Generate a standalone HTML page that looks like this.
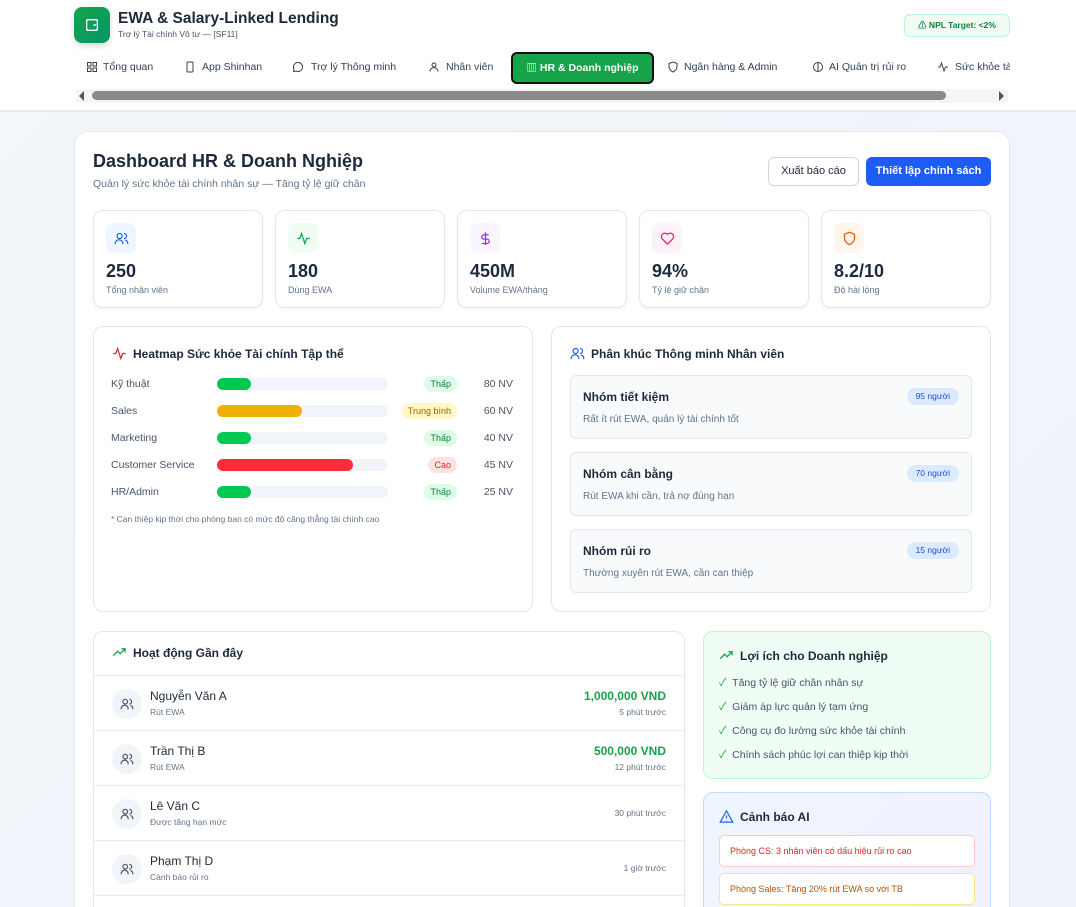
<!DOCTYPE html>
<html><head><meta charset="utf-8"><style>
*{box-sizing:border-box;margin:0;padding:0}
html,body{width:1076px;height:907px;overflow:hidden}
body{font-family:"Liberation Sans","Noto Sans CJK SC",sans-serif;background:linear-gradient(135deg,#f3f6fa,#eef3fb);color:#1e293b;position:relative}
.a{position:absolute}
svg{display:block}
.hdr{left:0;top:0;width:1076px;height:112px;background:#fff;border-bottom:2px solid #e5e9f0}
.nv{top:61px;font-size:10.5px;color:#334155;white-space:nowrap}
.ni{top:61px}
.card{background:#fff;border:1px solid #e2e8f0;border-radius:10px}
.stat{top:210px;width:170px;height:98px;box-shadow:0 1px 2px rgba(0,0,0,.06)}
.stat .ic{position:absolute;left:12px;top:12px;width:30px;height:30px;border-radius:7px;display:flex;align-items:center;justify-content:center}
.stat .v{position:absolute;left:12px;top:50px;font-size:18px;font-weight:bold;color:#1e293b}
.stat .l{position:absolute;left:12px;top:74px;font-size:9px;color:#64748b}
.row{left:111px;width:402px;height:16px;font-size:10.5px;color:#475569;line-height:16px}
.row .n{position:absolute;left:0;top:0}
.row .bg{position:absolute;left:106px;top:2px;width:171px;height:12px;border-radius:6px;background:#f1f5f9}
.row .f{height:12px;border-radius:6px}
.row .b{position:absolute;right:56px;top:0;height:16px;padding:0 6px;border-radius:8px;font-size:9px;line-height:16px}
.row .c{position:absolute;right:0;top:0}
.seg{left:570px;width:402px;height:64px;background:#f8fafc;border:1px solid #e2e8f0;border-radius:6px}
.seg .t{position:absolute;left:12px;top:14px;font-size:12px;font-weight:bold;color:#1e293b}
.seg .d{position:absolute;left:12px;top:38px;font-size:10px;color:#64748b}
.seg .p{position:absolute;right:12px;top:12px;background:#dbeafe;color:#1d4ed8;font-size:8.5px;padding:0 9px;height:17px;line-height:17px;border-radius:9px}
.act{left:94px;width:590px;height:55px;border-top:1px solid #e9edf3}
.act .av{position:absolute;left:18px;top:13px;width:30px;height:30px;border-radius:15px;background:#f1f5f9;display:flex;align-items:center;justify-content:center}
.act .nm{position:absolute;left:56px;top:13px;font-size:12px;color:#1e293b}
.act .sb{position:absolute;left:56px;top:31px;font-size:8.5px;color:#64748b}
.act .am{position:absolute;right:18px;top:13px;font-size:12px;font-weight:bold;color:#16a34a;text-align:right}
.act .tm{position:absolute;right:18px;top:31px;font-size:8.5px;color:#64748b}
.act .tm2{position:absolute;right:18px;top:22px;font-size:8.5px;color:#64748b}
.chk{font-size:10.5px;color:#475569;left:719px}
.chk b{color:#16a34a;font-weight:normal;margin-right:6px}
</style></head><body>
<div class="a hdr"></div>
<div class="a" style="left:74px;top:7px;width:36px;height:36px;border-radius:8px;background:linear-gradient(135deg,#16a34a,#059669);box-shadow:0 3px 6px rgba(0,0,0,.15);display:flex;align-items:center;justify-content:center">
<svg width="16" height="16" viewBox="0 0 24 24" fill="none" stroke="#fff" stroke-width="2"><rect x="4" y="4" width="16" height="16" rx="2"/><path d="M14 12h4"/></svg></div>
<div class="a" style="left:118px;top:10px;font-size:15.5px;font-weight:bold;color:#1e293b">EWA &amp; Salary-Linked Lending</div>
<div class="a" style="left:118px;top:29px;font-size:8.5px;color:#475569">Trợ lý Tài chính Vô tư — [SF11]</div>
<div class="a" style="left:904px;top:14px;width:106px;height:23px;border:1px solid #bbf7d0;background:#f0fdf4;border-radius:6px;font-size:8.5px;font-weight:bold;color:#15803d;line-height:21px;text-align:center">⚠ NPL Target: &lt;2%</div>

<svg class="a ni" style="left:86px" width="12" height="12" viewBox="0 0 24 24" fill="none" stroke="#334155" stroke-width="2"><rect x="3" y="3" width="7" height="7"/><rect x="14" y="3" width="7" height="7"/><rect x="3" y="14" width="7" height="7"/><rect x="14" y="14" width="7" height="7"/></svg>
<span class="a nv" style="left:103px">Tổng quan</span>
<svg class="a ni" style="left:184px" width="12" height="12" viewBox="0 0 24 24" fill="none" stroke="#334155" stroke-width="2"><rect x="6" y="2" width="12" height="20" rx="2"/></svg>
<span class="a nv" style="left:202px">App Shinhan</span>
<svg class="a ni" style="left:292px" width="12" height="12" viewBox="0 0 24 24" fill="none" stroke="#334155" stroke-width="2"><path d="M21 12a9 9 0 0 1-13 8l-5 1 1-5a9 9 0 1 1 17-4z"/></svg>
<span class="a nv" style="left:311px">Trợ lý Thông minh</span>
<svg class="a ni" style="left:428px" width="12" height="12" viewBox="0 0 24 24" fill="none" stroke="#334155" stroke-width="2"><circle cx="12" cy="8" r="4"/><path d="M4 21a8 8 0 0 1 16 0"/></svg>
<span class="a nv" style="left:446px">Nhân viên</span>
<div class="a" style="left:511px;top:52px;width:143px;height:32px;background:#16a34a;border:2px solid #111;border-radius:6px;color:#fff;font-size:10.5px;font-weight:bold;line-height:28px;text-align:center">▥ HR &amp; Doanh nghiệp</div>
<svg class="a ni" style="left:667px" width="12" height="12" viewBox="0 0 24 24" fill="none" stroke="#334155" stroke-width="2"><path d="M12 22s8-4 8-10V5l-8-3-8 3v7c0 6 8 10 8 10z"/></svg>
<span class="a nv" style="left:684px">Ngân hàng &amp; Admin</span>
<svg class="a ni" style="left:812px" width="12" height="12" viewBox="0 0 24 24" fill="none" stroke="#334155" stroke-width="2"><circle cx="12" cy="12" r="9"/><path d="M12 3v18"/></svg>
<span class="a nv" style="left:829px">AI Quản trị rủi ro</span>
<svg class="a ni" style="left:937px" width="12" height="12" viewBox="0 0 24 24" fill="none" stroke="#334155" stroke-width="2"><path d="M2 12h4l3-8 5 16 3-8h5"/></svg>
<span class="a nv" style="left:955px;width:55px;overflow:hidden">Sức khỏe tài</span>

<div class="a" style="left:76px;top:89px;width:932px;height:14px;background:#f5f5f5"></div>
<div class="a" style="left:79px;top:91px;width:0;height:0;border:5px solid transparent;border-right-color:#555;border-left:0"></div>
<div class="a" style="left:999px;top:91px;width:0;height:0;border:5px solid transparent;border-left-color:#555;border-right:0"></div>
<div class="a" style="left:92px;top:91px;width:854px;height:9px;border-radius:5px;background:#8a8a8a"></div>

<div class="a card" style="left:74px;top:131px;width:936px;height:800px;border-radius:14px"></div>
<div class="a" style="left:93px;top:151px;font-size:18px;font-weight:bold;color:#1e293b">Dashboard HR &amp; Doanh Nghiệp</div>
<div class="a" style="left:93px;top:178px;font-size:10.5px;color:#64748b">Quản lý sức khỏe tài chính nhân sự — Tăng tỷ lệ giữ chân</div>
<div class="a" style="left:768px;top:157px;width:91px;height:29px;border:1px solid #d1d5db;border-radius:6px;font-size:11px;line-height:27px;text-align:center;color:#1e293b;background:#fff">Xuất báo cáo</div>
<div class="a" style="left:866px;top:157px;width:125px;height:29px;border-radius:6px;font-size:11px;font-weight:bold;line-height:29px;text-align:center;color:#fff;background:#1d5cf5">Thiết lập chính sách</div>

<div class="a card stat" style="left:93px"><div class="ic" style="background:#eff6ff"><svg width="15" height="15" viewBox="0 0 24 24" fill="none" stroke="#2563eb" stroke-width="2"><circle cx="9" cy="8" r="4"/><path d="M2 21v-1a6 6 0 0 1 12 0v1M16 4a4 4 0 0 1 0 8M22 21v-1a6 6 0 0 0-4-5.6"/></svg></div><div class="v">250</div><div class="l">Tổng nhân viên</div></div>
<div class="a card stat" style="left:275px"><div class="ic" style="background:#f0fdf4"><svg width="15" height="15" viewBox="0 0 24 24" fill="none" stroke="#16a34a" stroke-width="2"><path d="M2 12h4l3-8 5 16 3-8h5"/></svg></div><div class="v">180</div><div class="l">Dùng EWA</div></div>
<div class="a card stat" style="left:457px"><div class="ic" style="background:#faf5ff"><svg width="15" height="15" viewBox="0 0 24 24" fill="none" stroke="#9333ea" stroke-width="2"><path d="M12 2v20M17 6H9.5a3.5 3.5 0 0 0 0 7h5a3.5 3.5 0 0 1 0 7H6"/></svg></div><div class="v">450M</div><div class="l">Volume EWA/tháng</div></div>
<div class="a card stat" style="left:639px"><div class="ic" style="background:#fdf2f8"><svg width="15" height="15" viewBox="0 0 24 24" fill="none" stroke="#db2777" stroke-width="2"><path d="M12 21l-8.5-8.5a5 5 0 0 1 8.5-7 5 5 0 0 1 8.5 7z"/></svg></div><div class="v">94%</div><div class="l">Tỷ lệ giữ chân</div></div>
<div class="a card stat" style="left:821px"><div class="ic" style="background:#fff7ed"><svg width="15" height="15" viewBox="0 0 24 24" fill="none" stroke="#ea580c" stroke-width="2"><path d="M12 22s8-4 8-10V5l-8-3-8 3v7c0 6 8 10 8 10z"/></svg></div><div class="v">8.2/10</div><div class="l">Độ hài lòng</div></div>

<div class="a card" style="left:93px;top:326px;width:440px;height:286px"></div>
<div class="a" style="left:112px;top:346px;display:flex;gap:6px;align-items:center;font-size:12px;font-weight:bold"><svg width="15" height="15" viewBox="0 0 24 24" fill="none" stroke="#dc2626" stroke-width="2"><path d="M2 12h4l3-8 5 16 3-8h5"/></svg>Heatmap Sức khỏe Tài chính Tập thể</div>
<div class="a row" style="top:376px"><span class="n">Kỹ thuật</span><div class="bg"><div class="f" style="width:34px;background:#00c853"></div></div><span class="b" style="background:#dcfce7;color:#15803d">Thấp</span><span class="c">80 NV</span></div>
<div class="a row" style="top:403px"><span class="n">Sales</span><div class="bg"><div class="f" style="width:85px;background:#f0b000"></div></div><span class="b" style="background:#fef9c3;color:#a16207">Trung bình</span><span class="c">60 NV</span></div>
<div class="a row" style="top:430px"><span class="n">Marketing</span><div class="bg"><div class="f" style="width:34px;background:#00c853"></div></div><span class="b" style="background:#dcfce7;color:#15803d">Thấp</span><span class="c">40 NV</span></div>
<div class="a row" style="top:457px"><span class="n">Customer Service</span><div class="bg"><div class="f" style="width:136px;background:#ff2d3a"></div></div><span class="b" style="background:#fee2e2;color:#dc2626">Cao</span><span class="c">45 NV</span></div>
<div class="a row" style="top:484px"><span class="n">HR/Admin</span><div class="bg"><div class="f" style="width:34px;background:#00c853"></div></div><span class="b" style="background:#dcfce7;color:#15803d">Thấp</span><span class="c">25 NV</span></div>
<div class="a" style="left:111px;top:514px;font-size:8.5px;color:#64748b">* Can thiệp kịp thời cho phòng ban có mức độ căng thẳng tài chính cao</div>

<div class="a card" style="left:551px;top:326px;width:440px;height:286px"></div>
<div class="a" style="left:570px;top:346px;display:flex;gap:6px;align-items:center;font-size:12px;font-weight:bold"><svg width="15" height="15" viewBox="0 0 24 24" fill="none" stroke="#2563eb" stroke-width="2"><circle cx="9" cy="8" r="4"/><path d="M2 21v-1a6 6 0 0 1 12 0v1M16 4a4 4 0 0 1 0 8M22 21v-1a6 6 0 0 0-4-5.6"/></svg>Phân khúc Thông minh Nhân viên</div>
<div class="a seg" style="top:375px"><span class="t">Nhóm tiết kiệm</span><span class="p">95 người</span><span class="d">Rất ít rút EWA, quản lý tài chính tốt</span></div>
<div class="a seg" style="top:452px"><span class="t">Nhóm cân bằng</span><span class="p">70 người</span><span class="d">Rút EWA khi cần, trả nợ đúng hạn</span></div>
<div class="a seg" style="top:529px"><span class="t">Nhóm rủi ro</span><span class="p">15 người</span><span class="d">Thường xuyên rút EWA, cần can thiệp</span></div>

<div class="a card" style="left:93px;top:631px;width:592px;height:300px"></div>
<div class="a" style="left:112px;top:645px;display:flex;gap:6px;align-items:center;font-size:12px;font-weight:bold"><svg width="15" height="15" viewBox="0 0 24 24" fill="none" stroke="#16a34a" stroke-width="2"><path d="M2 17l7-7 4 4 8-8M15 6h6v6"/></svg>Hoạt động Gần đây</div>
<div class="a act" style="top:675px"><div class="av"><svg width="14" height="14" viewBox="0 0 24 24" fill="none" stroke="#475569" stroke-width="2"><circle cx="9" cy="8" r="4"/><path d="M2 21v-1a6 6 0 0 1 12 0v1M16 4a4 4 0 0 1 0 8M22 21v-1a6 6 0 0 0-4-5.6"/></svg></div><span class="nm">Nguyễn Văn A</span><span class="sb">Rút EWA</span><span class="am">1,000,000 VND</span><span class="tm">5 phút trước</span></div>
<div class="a act" style="top:730px"><div class="av"><svg width="14" height="14" viewBox="0 0 24 24" fill="none" stroke="#475569" stroke-width="2"><circle cx="9" cy="8" r="4"/><path d="M2 21v-1a6 6 0 0 1 12 0v1M16 4a4 4 0 0 1 0 8M22 21v-1a6 6 0 0 0-4-5.6"/></svg></div><span class="nm">Trần Thị B</span><span class="sb">Rút EWA</span><span class="am">500,000 VND</span><span class="tm">12 phút trước</span></div>
<div class="a act" style="top:785px"><div class="av"><svg width="14" height="14" viewBox="0 0 24 24" fill="none" stroke="#475569" stroke-width="2"><circle cx="9" cy="8" r="4"/><path d="M2 21v-1a6 6 0 0 1 12 0v1M16 4a4 4 0 0 1 0 8M22 21v-1a6 6 0 0 0-4-5.6"/></svg></div><span class="nm">Lê Văn C</span><span class="sb">Được tăng hạn mức</span><span class="tm2">30 phút trước</span></div>
<div class="a act" style="top:840px"><div class="av"><svg width="14" height="14" viewBox="0 0 24 24" fill="none" stroke="#475569" stroke-width="2"><circle cx="9" cy="8" r="4"/><path d="M2 21v-1a6 6 0 0 1 12 0v1M16 4a4 4 0 0 1 0 8M22 21v-1a6 6 0 0 0-4-5.6"/></svg></div><span class="nm">Phạm Thị D</span><span class="sb">Cảnh báo rủi ro</span><span class="tm2">1 giờ trước</span></div>
<div class="a" style="left:94px;top:895px;width:590px;border-top:1px solid #e9edf3"></div>

<div class="a" style="left:703px;top:631px;width:288px;height:148px;background:#f0fdf4;border:1px solid #bbf7d0;border-radius:10px"></div>
<div class="a" style="left:719px;top:648px;display:flex;gap:6px;align-items:center;font-size:12px;font-weight:bold"><svg width="15" height="15" viewBox="0 0 24 24" fill="none" stroke="#16a34a" stroke-width="2"><path d="M2 17l7-7 4 4 8-8M15 6h6v6"/></svg>Lợi ích cho Doanh nghiệp</div>
<div class="a chk" style="top:675px"><b>✓</b>Tăng tỷ lệ giữ chân nhân sự</div>
<div class="a chk" style="top:699px"><b>✓</b>Giảm áp lực quản lý tạm ứng</div>
<div class="a chk" style="top:723px"><b>✓</b>Công cụ đo lường sức khỏe tài chính</div>
<div class="a chk" style="top:747px"><b>✓</b>Chính sách phúc lợi can thiệp kịp thời</div>

<div class="a" style="left:703px;top:792px;width:288px;height:140px;background:linear-gradient(135deg,#eff6ff,#f0f0ff);border:1px solid #bfdbfe;border-radius:10px"></div>
<div class="a" style="left:719px;top:809px;display:flex;gap:6px;align-items:center;font-size:12px;font-weight:bold"><svg width="15" height="15" viewBox="0 0 24 24" fill="none" stroke="#2563eb" stroke-width="2"><path d="M12 3L2 21h20z M12 10v5M12 18v.5"/></svg>Cảnh báo AI</div>
<div class="a" style="left:719px;top:835px;width:256px;height:32px;background:#fff;border:1px solid #fecaca;border-radius:5px;font-size:9px;color:#dc2626;line-height:30px;padding-left:10px">Phòng CS: 3 nhân viên có dấu hiệu rủi ro cao</div>
<div class="a" style="left:719px;top:873px;width:256px;height:32px;background:#fff;border:1px solid #fde68a;border-radius:5px;font-size:9px;color:#b45309;line-height:30px;padding-left:10px">Phòng Sales: Tăng 20% rút EWA so với TB</div>
</body></html>
